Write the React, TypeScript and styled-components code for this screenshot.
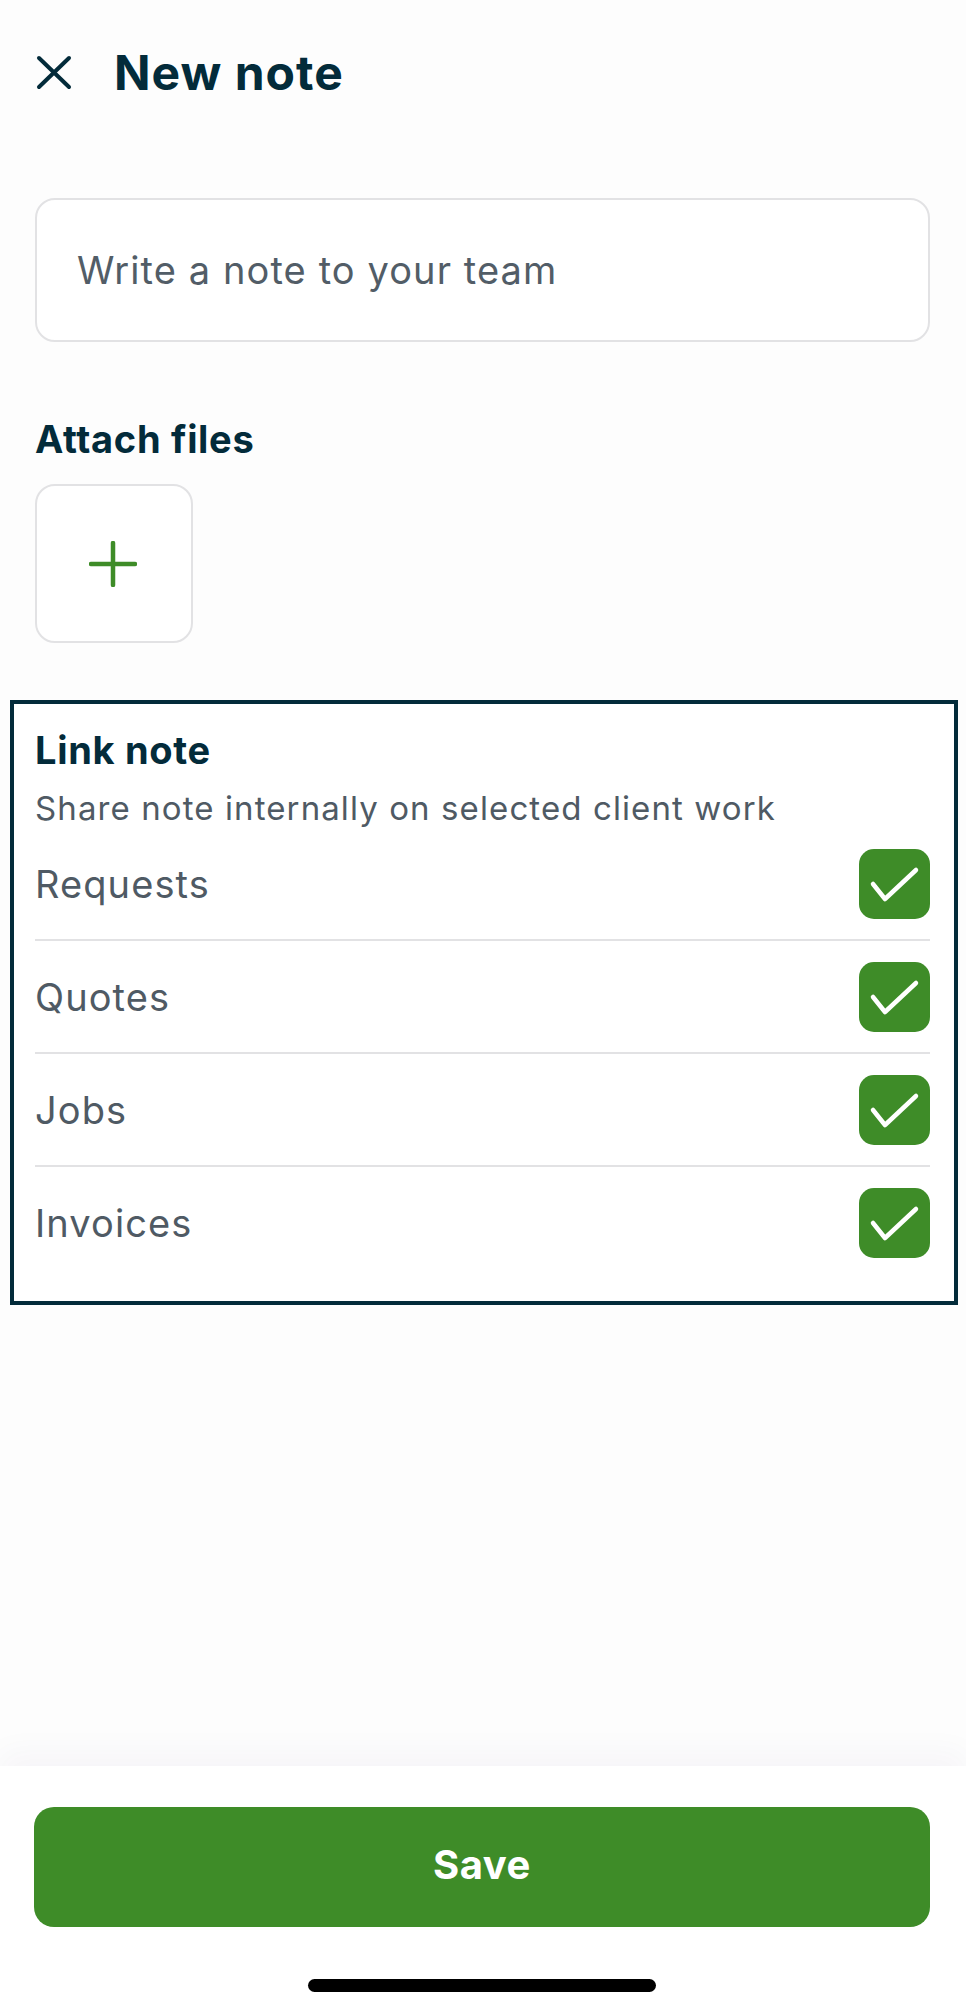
import React from "react";
import styled, { createGlobalStyle } from "styled-components";

const Global = createGlobalStyle`
  html, body { margin: 0; padding: 0; }
  body {
    background: #fdfdfd;
    font-family: Inter, "Noto Sans", "Liberation Sans", sans-serif;
    -webkit-font-smoothing: antialiased;
  }
  * { box-sizing: border-box; }
`;

const Screen = styled.div`
  min-height: 100vh;
  display: flex;
  flex-direction: column;
`;

const Main = styled.main`
  flex: 1;
  display: flex;
  flex-direction: column;
`;

const Padded = styled.div`
  padding: 0 36px 0 35px;
  display: flex;
  flex-direction: column;
`;

const Header = styled.header`
  display: flex;
  align-items: center;
  gap: 42px;
  height: 58px;
  margin-top: 44px;
  padding-left: 36px;
`;

const IconButton = styled.button`
  border: 0;
  background: none;
  padding: 0;
  width: 36px;
  height: 36px;
  display: flex;
  color: #032b3a;
`;

const Title = styled.h1`
  margin: 0;
  font-size: 48px;
  line-height: 58px;
  font-weight: 700;
  color: #032b3a;
  letter-spacing: 1px;
`;

const NoteInput = styled.div`
  margin-top: 96px;
  height: 144px;
  border: 2px solid #e2e2e4;
  border-radius: 20px;
  display: flex;
  align-items: center;
  padding-left: 40px;
  font-size: 38px;
  letter-spacing: 1.1px;
  color: #525d67;
  background: #fff;
`;

const SectionHeading = styled.h2<{ $top?: number }>`
  margin: ${(p) => p.$top ?? 0}px 0 0;
  font-size: 38px;
  line-height: 46px;
  font-weight: 700;
  letter-spacing: 0.7px;
  color: #032b3a;
`;

const AttachButton = styled.button`
  margin-top: 22px;
  width: 158px;
  height: 159px;
  border: 2px solid #e2e2e4;
  border-radius: 20px;
  background: #fff;
  display: flex;
  align-items: center;
  justify-content: center;
  padding: 0;
  padding-right: 2px;
`;

const LinkBox = styled.section`
  margin: 57px 8px 0 10px;
  border: 4px solid #032b3a;
  padding: 23px 24px 23px 21px;
  display: flex;
  flex-direction: column;
  background: #fff;
`;

const Subtitle = styled.p`
  margin: 16px 0 0;
  font-size: 33px;
  line-height: 39px;
  letter-spacing: 1.1px;
  color: #4f5a64;
`;

const Row = styled.label<{ $last?: boolean }>`
  display: flex;
  align-items: center;
  justify-content: space-between;
  height: ${(p) => (p.$last ? 111 : 113)}px;
  border-bottom: ${(p) => (p.$last ? "none" : "2px solid #e2e2e4")};
`;

const RowLabel = styled.span`
  font-size: 38px;
  letter-spacing: 1.1px;
  color: #4f5a64;
`;

const Check = styled.span`
  width: 71px;
  height: 70px;
  border-radius: 15px;
  background: #3e8c28;
  display: flex;
`;

const Footer = styled.footer`
  background: #fff;
  box-shadow: 0 -14px 30px rgba(60, 40, 110, 0.035);
  padding: 41px 36px 20px 34px;
  display: flex;
  flex-direction: column;
  align-items: center;
`;

const SaveButton = styled.button`
  width: 100%;
  height: 120px;
  border: 0;
  border-radius: 20px;
  background: #3e8c28;
  color: #fff;
  font-family: inherit;
  font-size: 40px;
  font-weight: 700;
  letter-spacing: 0.5px;
  padding: 0 0 6px;
`;

const HomeIndicator = styled.div`
  margin-top: 52px;
  width: 348px;
  height: 13px;
  border-radius: 7px;
  background: #000;
`;

const CloseIcon = () => (
  <svg width="36" height="36" viewBox="0 0 36 36" fill="none">
    <path d="M3 3L33 32M33 3L3 32" stroke="currentColor" strokeWidth="4" strokeLinecap="round" />
  </svg>
);

const PlusIcon = () => (
  <svg width="48" height="46" viewBox="0 0 48 46" fill="none">
    <path d="M24 2V44M2 23H46" stroke="#3e8c28" strokeWidth="4.5" strokeLinecap="round" />
  </svg>
);

const CheckIcon = () => (
  <svg width="71" height="70" viewBox="0 0 71 70" fill="none">
    <path d="M14 35L26 50L57 21" stroke="#fff" strokeWidth="4.5" strokeLinecap="round" strokeLinejoin="round" />
  </svg>
);

const items = ["Requests", "Quotes", "Jobs", "Invoices"];

export default function App() {
  return (
    <>
      <Global />
      <Screen>
        <Main>
          <Header>
            <IconButton aria-label="Close">
              <CloseIcon />
            </IconButton>
            <Title>New note</Title>
          </Header>
          <Padded>
            <NoteInput>Write a note to your team</NoteInput>
            <SectionHeading $top={74}>Attach files</SectionHeading>
            <AttachButton aria-label="Attach files">
              <PlusIcon />
            </AttachButton>
          </Padded>
          <LinkBox>
            <SectionHeading>Link note</SectionHeading>
            <Subtitle>Share note internally on selected client work</Subtitle>
            {items.map((it, i) => (
              <Row key={it} $last={i === items.length - 1}>
                <RowLabel>{it}</RowLabel>
                <Check>
                  <CheckIcon />
                </Check>
              </Row>
            ))}
          </LinkBox>
        </Main>
        <Footer>
          <SaveButton>Save</SaveButton>
          <HomeIndicator />
        </Footer>
      </Screen>
    </>
  );
}
